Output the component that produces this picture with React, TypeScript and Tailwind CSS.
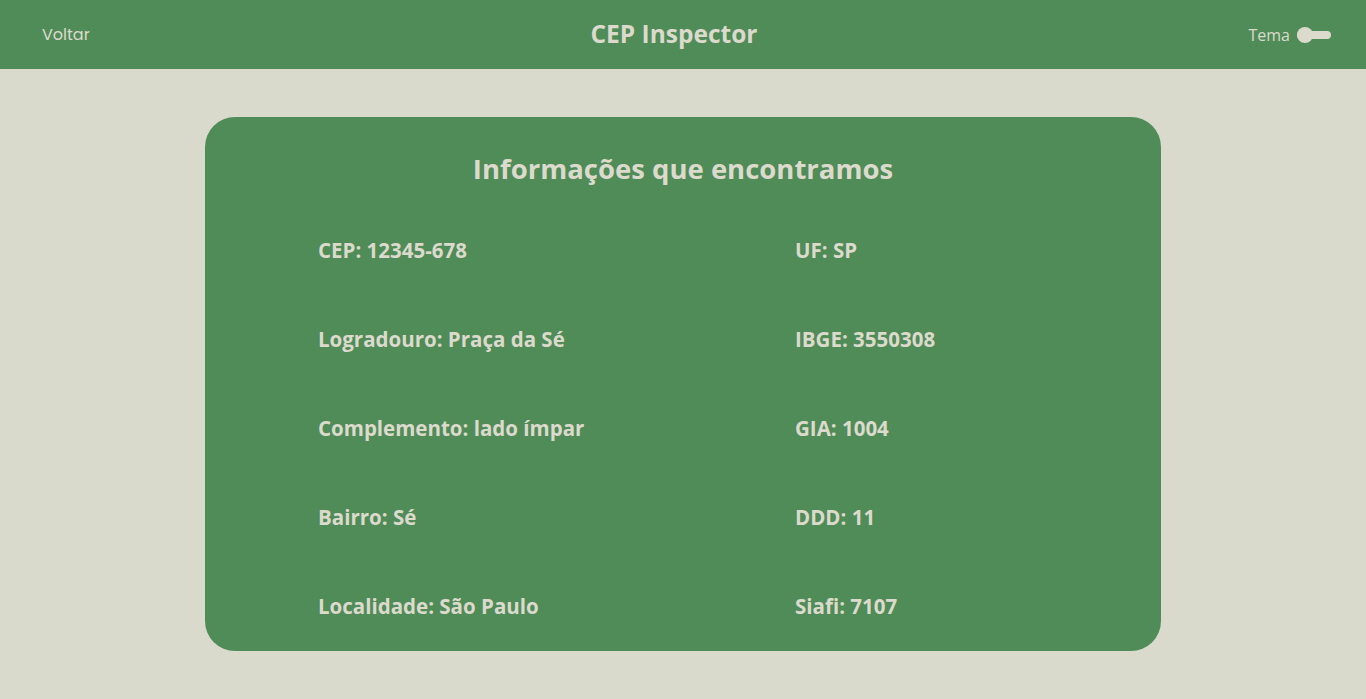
import React from "react";

const left: [string, string][] = [
  ["CEP", "12345-678"],
  ["Logradouro", "Praça da Sé"],
  ["Complemento", "lado ímpar"],
  ["Bairro", "Sé"],
  ["Localidade", "São Paulo"],
];
const right: [string, string][] = [
  ["UF", "SP"],
  ["IBGE", "3550308"],
  ["GIA", "1004"],
  ["DDD", "11"],
  ["Siafi", "7107"],
];

export default function App() {
  const [dark, setDark] = React.useState(false);
  const rows = left.map((l, i) => [l, right[i]] as const);

  return (
    <div className="min-h-[699px] bg-[#dadacc] font-['Open_Sans',sans-serif] text-[#dcdacc]">
      <header className="h-[69px] bg-[#508c58] flex items-center pl-[42px] pr-[35px]">
        <button className="w-[140px] text-[16px] font-['Poppins','Lato',sans-serif] text-[#dcdacc] text-left">
          Voltar
        </button>
        <h1 className="flex-1 text-center text-[24.5px] font-bold">CEP Inspector</h1>
        <div className="w-[165px] flex items-center justify-end gap-[7px]">
          <span className="text-[16px]">Tema</span>
          <button
            onClick={() => setDark(!dark)}
            className="relative w-[34px] h-[16px] flex items-center"
          >
            <span className="block w-full h-[8px] rounded-full bg-[#dcdacc]" />
            <span
              className={
                dark
                  ? "absolute right-0 top-0 w-[16px] h-[16px] rounded-full bg-[#dcdacc]"
                  : "absolute left-0 top-0 w-[16px] h-[16px] rounded-full bg-[#dcdacc]"
              }
            />
          </button>
        </div>
      </header>

      <main className="pt-[48px] pb-[48px] flex justify-center">
        <section className="w-[956px] h-[534px] bg-[#508c58] rounded-[30px] pt-[30px]">
          <h2 className="text-center text-[27.5px] font-bold h-[44px] leading-[44px]">
            Informações que encontramos
          </h2>
          <div className="mt-[15px] pl-[113px]">
            {rows.map(([l, r]) => (
              <div key={l[0]} className="grid grid-cols-[477px_1fr] h-[89px] items-center text-[20.5px] font-bold">
                <span>
                  {l[0]}: {l[1]}
                </span>
                <span>
                  {r[0]}: {r[1]}
                </span>
              </div>
            ))}
          </div>
        </section>
      </main>
    </div>
  );
}
